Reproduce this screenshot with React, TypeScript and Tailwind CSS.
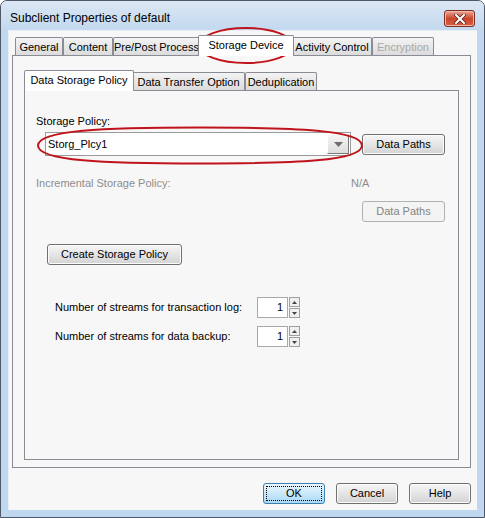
import React from "react";

function Tab({
  label,
  width,
  selected = false,
  disabled = false,
  first = false,
}: {
  label: string;
  width: string;
  selected?: boolean;
  disabled?: boolean;
  first?: boolean;
}) {
  if (selected) {
    return (
      <div
        className={`relative z-10 ${width} h-[21px] -mb-px ${first ? "mr-[-2px]" : "mx-[-2px]"} border border-b-0 border-[#898c95] bg-white rounded-t-[2px] flex items-start justify-center pt-[3px] text-[11px] leading-[13px] text-black`}
      >
        {label}
      </div>
    );
  }
  return (
    <div
      className={`${width} h-[18px] border border-b-0 border-[#898c95] rounded-t-[2px] bg-gradient-to-b from-[#f3f3f3] to-[#dcdcdc] flex items-start justify-center pt-[3px] text-[11px] leading-[13px] ${disabled ? "text-[#a8a8a8]" : "text-black"}`}
    >
      {label}
    </div>
  );
}

function WinButton({
  label,
  width,
  disabled = false,
  isDefault = false,
}: {
  label: string;
  width: string;
  disabled?: boolean;
  isDefault?: boolean;
}) {
  if (disabled) {
    return (
      <div
        className={`${width} h-[21px] rounded-[3px] border border-[#adb2b5] bg-[#f4f4f4] flex items-center justify-center text-[11px] text-[#838383]`}
      >
        {label}
      </div>
    );
  }
  if (isDefault) {
    return (
      <div
        className={`${width} h-[21px] rounded-[3px] border border-[#3c7fb1] bg-gradient-to-b from-[#eaf6fd] to-[#a7d9f5] p-[2px]`}
      >
        <div className="h-full w-full border border-dotted border-black flex items-center justify-center text-[11px] text-black">
          {label}
        </div>
      </div>
    );
  }
  return (
    <div
      className={`${width} h-[21px] rounded-[3px] border border-[#707070] bg-gradient-to-b from-[#f6f6f6] via-[#e5e5e5] to-[#d3d3d3] shadow-[inset_0_0_0_1px_#fcfcfc] flex items-center justify-center text-[11px] text-black`}
    >
      {label}
    </div>
  );
}

function SpinBox({ value }: { value: string }) {
  return (
    <div className="flex items-stretch h-[21px]">
      <div className="w-[31px] border border-[#a9a9a9] bg-white flex items-center justify-end pr-[4px] text-[11px]">
        {value}
      </div>
      <div className="w-[11px] flex flex-col ml-px">
        <div className="h-[10px] border border-[#a0a0a0] bg-[#f0f0f0] flex items-center justify-center">
          <svg width="5" height="3" viewBox="0 0 5 3">
            <path d="M2.5 0 L5 3 L0 3 Z" fill="#444" />
          </svg>
        </div>
        <div className="h-[10px] mt-px border border-[#a0a0a0] bg-[#f0f0f0] flex items-center justify-center">
          <svg width="5" height="3" viewBox="0 0 5 3">
            <path d="M0 0 L5 0 L2.5 3 Z" fill="#444" />
          </svg>
        </div>
      </div>
    </div>
  );
}

export default function App() {
  return (
    <div className="relative w-[485px] h-[518px] overflow-hidden rounded-t-[7px] border border-[#4e5866] bg-[#bfd7ef] flex flex-col font-['Liberation_Sans',Arial,sans-serif] text-black select-none">
      {/* title bar */}
      <div className="h-[29px] flex items-start justify-between pl-[9px] pr-[9px] bg-gradient-to-b from-[#dbe7f4] to-[#c3d9ef]">
        <div className="mt-[10px] text-[12px] leading-[14px] text-black">
          Subclient Properties of default
        </div>
        <div className="mt-[9px] w-[31px] h-[17px] rounded-[3px] border border-[#7a2f22] bg-gradient-to-b from-[#e9a797] via-[#c9452c] to-[#d55f45] flex items-center justify-center shadow-[inset_0_0_0_1px_#f2b8a8]">
          <svg width="12" height="10" viewBox="0 0 12 10">
            <path d="M2 1 L10 9 M10 1 L2 9" stroke="#5a2418" strokeWidth="3.6" strokeLinecap="square" />
            <path d="M2 1 L10 9 M10 1 L2 9" stroke="#ffffff" strokeWidth="2" strokeLinecap="square" />
          </svg>
        </div>
      </div>

      {/* client area */}
      <div className="flex-1 mx-[7px] mb-[7px] bg-[#f7f7f7] border-l border-t border-[#e8eef5] flex flex-col pt-[4px]">
        {/* main tabs */}
        <div className="flex items-end h-[20px] pl-[6px]">
          <Tab label="General" width="w-[48px]" />
          <Tab label="Content" width="w-[50px]" />
          <Tab label="Pre/Post Process" width="w-[87px]" />
          <Tab label="Storage Device" width="w-[96px]" selected />
          <Tab label="Activity Control" width="w-[80px]" />
          <Tab label="Encryption" width="w-[62px]" disabled />
        </div>

        {/* outer panel */}
        <div className="flex-1 ml-[3px] mr-[6px] border border-[#898c95] bg-[#f7f7f7] flex flex-col pt-[14px] px-[11px] pb-[7px]">
          {/* sub tabs */}
          <div className="flex items-end h-[20px]">
            <Tab label="Data Storage Policy" width="w-[110px]" selected first />
            <Tab label="Data Transfer Option" width="w-[113px]" />
            <Tab label="Deduplication" width="w-[72px]" />
          </div>

          {/* inner panel */}
          <div className="flex-1 border border-[#898c95] bg-[#f7f7f7] flex flex-col pl-[11px] pr-[13px] pt-[24px] text-[11px]">
            <div className="h-[13px] leading-[13px]">Storage Policy:</div>

            <div className="mt-[4px] flex items-center h-[24px]">
              <div className="ml-[9px] w-[306px] h-[24px] border border-[#9a9a9a] bg-white flex items-stretch">
                <div className="flex-1 flex items-center pl-[2px] text-[11px]">
                  Storg_Plcy1
                </div>
                <div className="w-[22px] m-px border-l border-t border-white border-r border-b border-r-[#7a7a7a] border-b-[#7a7a7a] bg-gradient-to-b from-[#f4f4f4] to-[#dedede] flex items-center justify-center">
                  <svg width="9" height="5" viewBox="0 0 9 5">
                    <path d="M0 0 L9 0 L4.5 5 Z" fill="#6d6d6d" />
                  </svg>
                </div>
              </div>
              <div className="ml-[11px]">
                <WinButton label="Data Paths" width="w-[83px]" />
              </div>
            </div>

            <div className="mt-[21px] flex h-[13px] leading-[13px] text-[#8d8d8d]">
              <div className="w-[315px]">Incremental Storage Policy:</div>
              <div>N/A</div>
            </div>

            <div className="mt-[11px] self-end">
              <WinButton label="Data Paths" width="w-[83px]" disabled />
            </div>

            <div className="mt-[22px] ml-[11px]">
              <WinButton label="Create Storage Policy" width="w-[135px]" />
            </div>

            <div className="mt-[32px] ml-[19px] flex items-center">
              <div className="w-[202px]">Number of streams for transaction log:</div>
              <SpinBox value="1" />
            </div>
            <div className="mt-[8px] ml-[19px] flex items-center">
              <div className="w-[202px]">Number of streams for data backup:</div>
              <SpinBox value="1" />
            </div>
          </div>
        </div>

        {/* dialog buttons */}
        <div className="flex justify-end gap-[11px] pt-[15px] pb-[6px] pr-[6px]">
          <WinButton label="OK" width="w-[62px]" isDefault />
          <WinButton label="Cancel" width="w-[62px]" />
          <WinButton label="Help" width="w-[62px]" />
        </div>
      </div>

      {/* red annotation marks */}
      <svg
        className="absolute left-0 top-0 pointer-events-none"
        width="485"
        height="518"
        viewBox="0 0 485 518"
      >
        <ellipse cx="245" cy="44.5" rx="47" ry="17.5" fill="none" stroke="#c0141c" strokeWidth="2" />
        <path
          d="M199 126.5 C295 126.5 361 129 361 144.5 C361 160 295 162.5 199 162.5 C103 162.5 37 160 37 144.5 C37 129 103 126.5 199 126.5 Z"
          fill="none"
          stroke="#c0141c"
          strokeWidth="2"
        />
      </svg>
    </div>
  );
}
